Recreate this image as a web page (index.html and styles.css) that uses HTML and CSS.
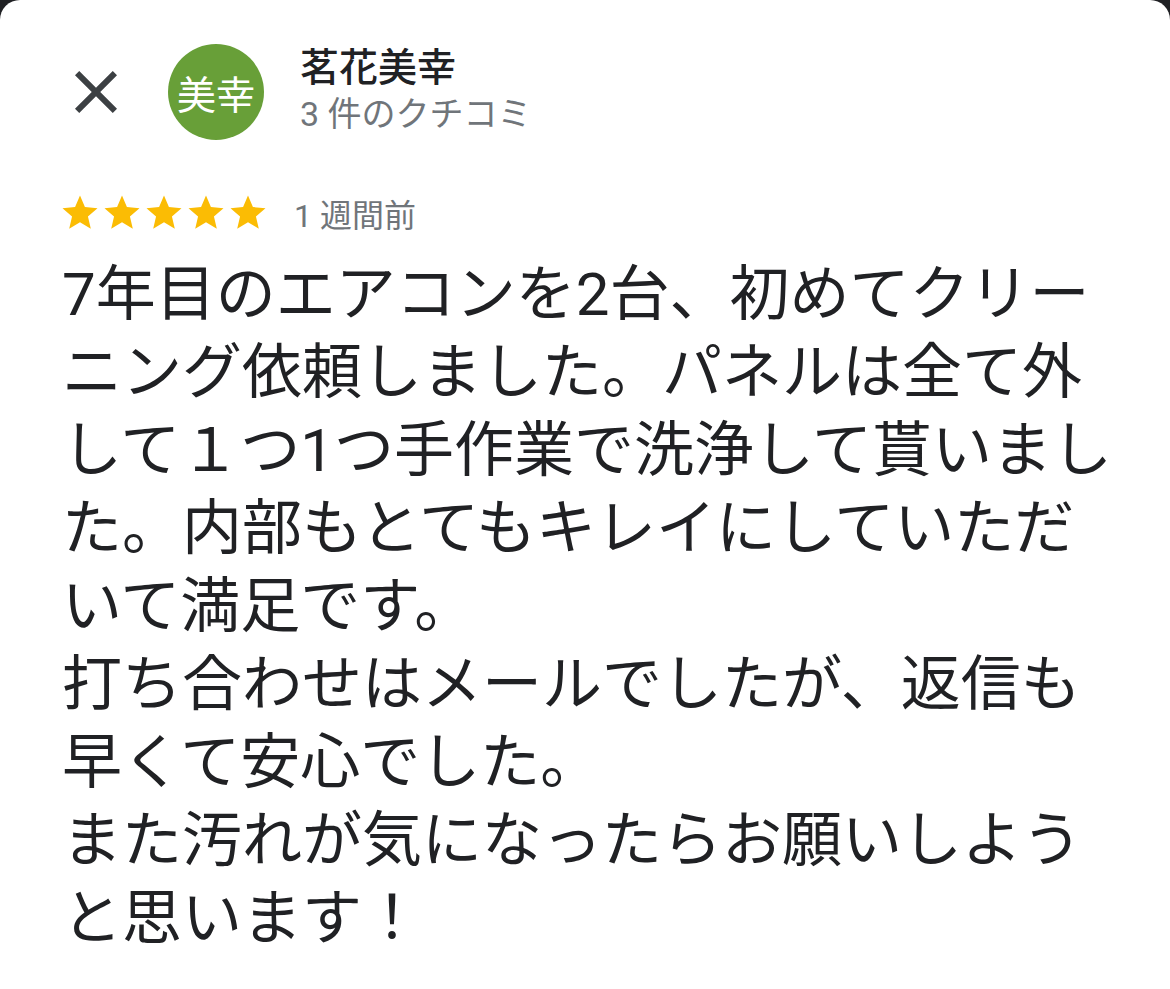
FILE: index.html
```html
<!DOCTYPE html>
<html lang="ja">
<head>
<meta charset="utf-8">
<title>クチコミ</title>
<link rel="stylesheet" href="styles.css">
</head>
<body>
<div class="card">
  <header class="header">
    <button class="close" aria-label="閉じる">
      <svg viewBox="0 0 24 24" width="72" height="72"><path d="M19 6.41L17.59 5 12 10.59 6.41 5 5 6.41 10.59 12 5 17.59 6.41 19 12 13.41 17.59 19 19 17.59 13.41 12z" fill="#3c4043"/></svg>
    </button>
    <div class="avatar">美幸</div>
    <div class="who">
      <div class="name">茗花美幸</div>
      <div class="count">3 件のクチコミ</div>
    </div>
  </header>
  <div class="meta">
    <div class="stars">
      <svg viewBox="0 0 24 24" width="42" height="42"><path d="M12 17.27L18.18 21l-1.64-7.03L22 9.24l-7.19-.61L12 2 9.19 8.63 2 9.24l5.46 4.73L5.82 21z" fill="#fbbc04"/></svg>
      <svg viewBox="0 0 24 24" width="42" height="42"><path d="M12 17.27L18.18 21l-1.64-7.03L22 9.24l-7.19-.61L12 2 9.19 8.63 2 9.24l5.46 4.73L5.82 21z" fill="#fbbc04"/></svg>
      <svg viewBox="0 0 24 24" width="42" height="42"><path d="M12 17.27L18.18 21l-1.64-7.03L22 9.24l-7.19-.61L12 2 9.19 8.63 2 9.24l5.46 4.73L5.82 21z" fill="#fbbc04"/></svg>
      <svg viewBox="0 0 24 24" width="42" height="42"><path d="M12 17.27L18.18 21l-1.64-7.03L22 9.24l-7.19-.61L12 2 9.19 8.63 2 9.24l5.46 4.73L5.82 21z" fill="#fbbc04"/></svg>
      <svg viewBox="0 0 24 24" width="42" height="42"><path d="M12 17.27L18.18 21l-1.64-7.03L22 9.24l-7.19-.61L12 2 9.19 8.63 2 9.24l5.46 4.73L5.82 21z" fill="#fbbc04"/></svg>
    </div>
    <span class="date">1 週間前</span>
  </div>
  <p class="review">7年目のエアコンを2台、初めてクリー<br>ニング依頼しました。パネルは全て外<br>して１つ1つ手作業で洗浄して貰いまし<br>た。内部もとてもキレイにしていただ<br>いて満足です。<br>打ち合わせはメールでしたが、返信も<br>早くて安心でした。<br>また汚れが気になったらお願いしよう<br>と思います！</p>
</div>
</body>
</html>
```

FILE: styles.css
```css
html, body {
  margin: 0;
  padding: 0;
  background: #202124;
}
body {
  font-family: Roboto, "Noto Sans CJK JP", "Noto Sans", sans-serif;
  color: #202124;
  overflow: hidden;
}
.card {
  background: #fff;
  border-radius: 20px 20px 0 0;
  min-height: 989px;
  box-sizing: border-box;
  padding: 44px 0 0 0;
}
.header {
  display: flex;
  align-items: center;
  height: 96px;
}
.close {
  border: 0;
  background: none;
  padding: 0;
  margin-left: 60px;
  width: 72px;
  height: 72px;
  display: flex;
}
.close svg {
  display: block;
}
.avatar {
  margin-left: 36px;
  width: 96px;
  height: 96px;
  border-radius: 50%;
  background: #689f38;
  color: #fff;
  font-size: 39px;
  display: flex;
  align-items: center;
  justify-content: center;
  font-family: "Noto Sans CJK JP", sans-serif;
}
.who {
  margin-left: 36px;
  display: flex;
  flex-direction: column;
  margin-top: -2px;
}
.name {
  font-size: 39px;
  line-height: 46px;
  font-weight: 500;
  color: #202124;
}
.count {
  font-size: 34px;
  line-height: 46px;
  color: #70757a;
}
.meta {
  display: flex;
  align-items: center;
  margin-top: 52px;
  padding-left: 59px;
  height: 42px;
}
.stars {
  display: flex;
}
.stars svg {
  display: block;
}
.date {
  margin-left: 25px;
  font-size: 32px;
  color: #70757a;
}
.review {
  margin: 22px 0 0 0;
  padding-left: 62px;
  font-size: 60px;
  line-height: 78px;
  color: #202124;
  white-space: nowrap;
}
```
